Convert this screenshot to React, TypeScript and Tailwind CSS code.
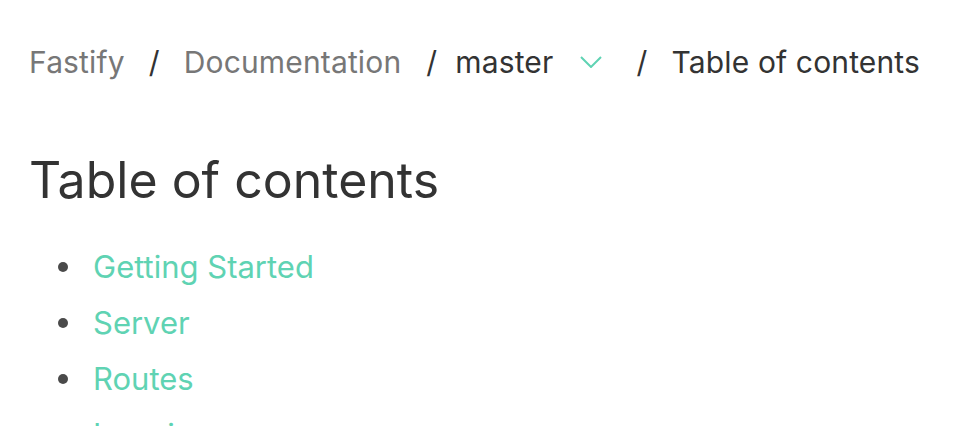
import React from "react";

const sections = ["Getting Started", "Server", "Routes", "Logging"];

export default function App() {
  return (
    <div className="h-[426px] overflow-hidden bg-white px-[29px] pt-[40px] font-['Inter',sans-serif] text-[#333333]">
      {/* Breadcrumb */}
      <nav className="flex items-center whitespace-nowrap text-[30px] leading-[44px] tracking-[0.15px]">
        <span className="text-[#777777]">Fastify</span>
        <span className="mx-[24px]">/</span>
        <span className="text-[#777777]">Documentation</span>
        <span className="ml-[25px] mr-[18px]">/</span>
        <span className="flex items-center">
          master
          <svg className="ml-[27px] mr-[34px]" width="22" height="12" viewBox="0 0 22 12" fill="none">
            <path d="M1 1l10 10L21 1" stroke="#5fd3b3" strokeWidth="2" />
          </svg>
        </span>
        <span className="mr-[24px]">/</span>
        <span>Table of contents</span>
      </nav>

      {/* Title */}
      <h1 className="mt-[66px] text-[50px] leading-[60px] text-[#333333]">Table of contents</h1>

      {/* Sections */}
      <ul className="mt-[29px] text-[31px] leading-[56px]">
        {sections.map((s) => (
          <li key={s} className="flex items-center">
            <span className="ml-[29px] mr-[25px] h-[10px] w-[10px] shrink-0 rounded-full bg-[#4a4a4a]" />
            <a href="#" className="text-[#5fd3b3]">
              {s}
            </a>
          </li>
        ))}
      </ul>
    </div>
  );
}
